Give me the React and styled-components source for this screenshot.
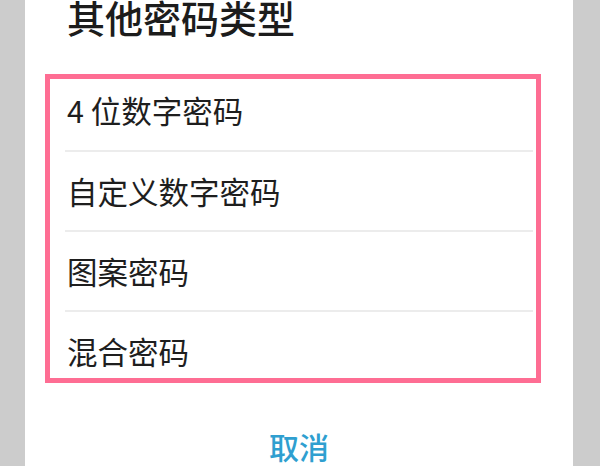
import styled, { createGlobalStyle } from "styled-components"

const GlobalStyle = createGlobalStyle`
  html, body {
    margin: 0;
    padding: 0;
    background: #cccccc;
    overflow: hidden;
  }
  body {
    font-family: "Noto Sans CJK SC", "Noto Sans", sans-serif;
  }
`

const Page = styled.div`
  width: 600px;
  height: 466px;
  padding: 0 27px 0 25px;
  box-sizing: border-box;
  overflow: hidden;
`

const Panel = styled.div`
  background: #ffffff;
  height: 100%;
  display: flex;
  flex-direction: column;
`

const Title = styled.h2`
  margin: -3px 0 37px 0;
  padding-left: 42px;
  font-size: 38px;
  line-height: 40px;
  font-weight: 500;
  color: #1c1c1c;
`

// the pink annotation frame around the options
const Frame = styled.div`
  margin: 0 32px 0 20px;
  border: 5px solid #fe6d93;
  overflow: hidden;
`

const List = styled.ul`
  list-style: none;
  margin: -9px 0 -7px 0;
  padding: 0;
`

const Row = styled.li`
  height: 80px;
  margin: 0 3px 0 15px;
  padding-left: 2px;
  display: flex;
  align-items: center;
  font-size: 30.5px;
  color: #1e1e1e;
  border-top: ${p => (p.$first ? "none" : "2px solid #ececec")};
  box-sizing: border-box;
`

const Cancel = styled.div`
  margin-top: 43px;
  text-align: center;
  font-size: 30px;
  line-height: 40px;
  font-weight: 500;
  color: #2f9fd0;
`

const options = ["4 位数字密码", "自定义数字密码", "图案密码", "混合密码"]

export default function App() {
  return (
    <Page>
      <GlobalStyle />
      <Panel>
        <Title>其他密码类型</Title>
        <Frame>
          <List>
            {options.map((label, i) => (
              <Row key={label} $first={i === 0}>
                {label}
              </Row>
            ))}
          </List>
        </Frame>
        <Cancel>取消</Cancel>
      </Panel>
    </Page>
  )
}
